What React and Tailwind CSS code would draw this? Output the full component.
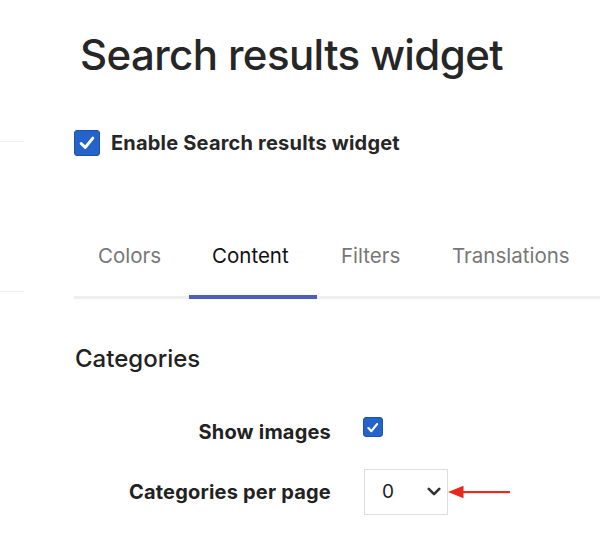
import React from "react";

function Check({ size, radius }) {
  return (
    <div
      className={`flex items-center justify-center bg-[#2463c9] border border-[#1d52a8] ${size} ${radius}`}
    >
      <svg viewBox="0 0 20 20" className="w-[75%] h-[75%]" fill="none">
        <path d="M3.5 10.5 L8 15 L16.5 4.5" stroke="white" strokeWidth="3.2" strokeLinecap="round" strokeLinejoin="round" />
      </svg>
    </div>
  );
}

export default function App() {
  return (
    <div className="w-[600px] h-[557px] bg-white overflow-hidden flex font-['Inter',sans-serif] text-[#222]">
      <div className="w-[24px] shrink-0 flex flex-col">
        <div className="h-[141px]" />
        <div className="h-px bg-[#eeeeee]" />
        <div className="h-[149px]" />
        <div className="h-px bg-[#eeeeee]" />
      </div>
      <div className="ml-[50px] flex-1 flex flex-col">
        <h1 className="mt-[29px] ml-[6px] text-[42px] leading-[52px] font-medium tracking-[-0.6px] text-[#262626] whitespace-nowrap">
          Search results widget
        </h1>
        <div className="mt-[49px] flex items-center h-[26px]">
          <Check size="w-[26px] h-[26px]" radius="rounded-[3px]" />
          <span className="ml-[11px] text-[20px] tracking-[0.2px] font-bold text-[#262626] whitespace-nowrap">Enable Search results widget</span>
        </div>
        <div className="mt-[85px] flex border-b-[3px] border-[#efefef] text-[20.5px] text-[#777]">
          <div className="w-[115px] pl-[24px] pb-[24px]">Colors</div>
          <div className="w-[128px] pl-[23px] pb-[24px] text-[#111] relative">
            Content
            <div className="absolute left-0 right-0 -bottom-[3px] h-[4px] bg-[#4e5bbf]" />
          </div>
          <div className="w-[111px] pl-[24px] pb-[24px]">Filters</div>
          <div className="pl-[24px] pb-[24px] whitespace-nowrap">Translations</div>
        </div>
        <h2 className="mt-[46px] ml-[1px] text-[24px] font-medium text-[#222] leading-[28px]">Categories</h2>
        <div className="mt-[48px] flex items-center h-[22px]">
          <div className="w-[257px] text-right text-[20px] tracking-[0.2px] font-bold text-[#222] whitespace-nowrap">Show images</div>
          <div className="ml-[32px] -mt-[9px]">
            <Check size="w-[20px] h-[20px]" radius="rounded-[3px]" />
          </div>
        </div>
        <div className="mt-[26px] flex items-center">
          <div className="w-[257px] text-right text-[20px] tracking-[0.2px] font-bold text-[#222] whitespace-nowrap">Categories per page</div>
          <div className="ml-[33px] w-[84px] h-[46px] border border-[#dddddd] flex items-center pl-[17px] pr-[6px]">
            <span className="text-[19px] text-[#222] flex-1">0</span>
            <svg viewBox="0 0 16 10" className="w-[14px] h-[9px]" fill="none">
              <path d="M2 2 L8 8 L14 2" stroke="#333" strokeWidth="3" strokeLinecap="round" strokeLinejoin="round" />
            </svg>
          </div>
          <svg viewBox="0 0 64 14" className="w-[62px] h-[14px] ml-[0px]">
            <path d="M0 7 L16 0.5 L16 13.5 Z" fill="#e8281b" />
            <rect x="14" y="6" width="50" height="2.2" fill="#e8281b" />
          </svg>
        </div>
      </div>
    </div>
  );
}
